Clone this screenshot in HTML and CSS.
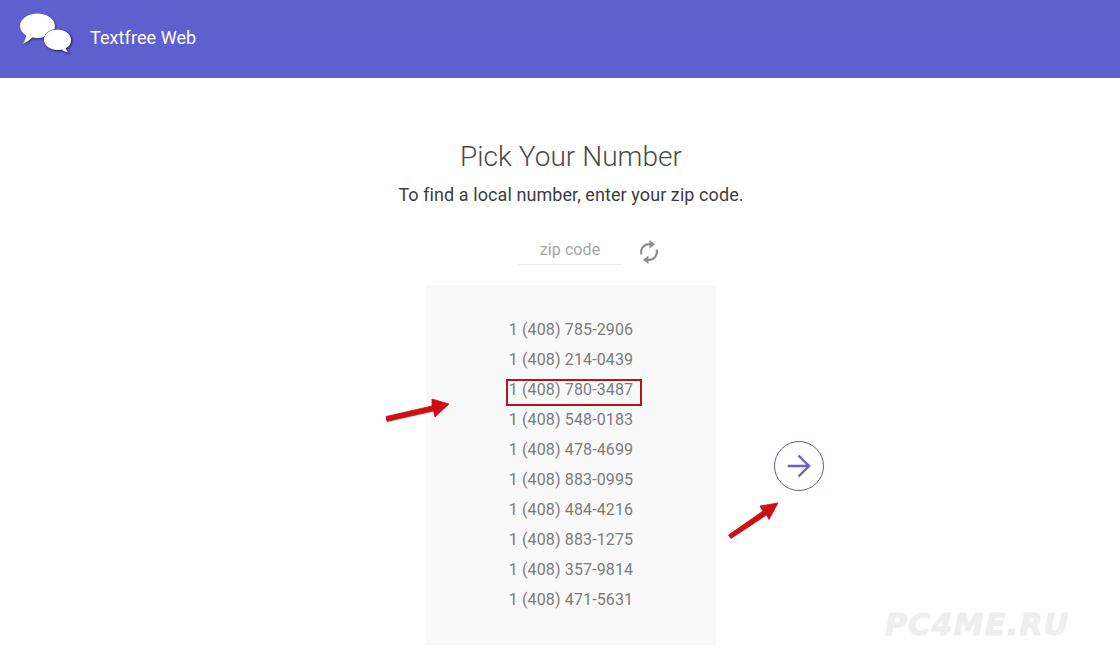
FILE: index.html
```html
<!DOCTYPE html>
<html lang="en">
<head>
  <meta charset="UTF-8" />
  <title>Textfree Web</title>
  <link rel="stylesheet" href="styles.css">
</head>
<body>

  <header class="header">
    <svg class="logo" width="56" height="42" viewBox="18 12 56 42">
      <path class="logo-bubble" d="M37.500 13.500C47 13.500 55 19 55 26C55 33 47 38 37.500 38C35.500 38 33.500 37.800 32 37.500C30 39.500 26.500 42.500 23 43.500C25 41 26 37.500 26 35.500C22 33 20 29.500 20 26C20 19 28 13.500 37.500 13.500Z" />
      <path class="logo-bubble logo-bubble-front" d="M57.500 29.500C65 29.500 71 34 71 40C71 44 69 46.500 66 48C66 49.500 67 51 68.500 52.500C65.500 52 62.500 50.500 61.500 49.500C60.500 50 59 50 57.500 50C50 50 44 45.500 44 40C44 34 50 29.500 57.500 29.500Z" />
    </svg>
    <span class="brand">Textfree Web</span>
  </header>

  <main class="content">
    <h1 class="title">Pick Your Number</h1>
    <p class="subtitle">To find a local number, enter your zip code.</p>

    <div class="zip-row">
      <input class="zip-input" type="text" placeholder="zip code" />
      <svg class="refresh" width="20" height="26" viewBox="639 239 20 26">
        <path class="refresh-arc" d="M641.500 254.500A8 8 0 0 1 650 244.200" />
        <path class="refresh-arc" d="M656.500 249.500A8 8 0 0 1 648 259.800" />
        <path d="M649.500 240L655 244.200L649.500 248.400Z" />
        <path d="M648.500 255.600L643 259.800L648.500 264Z" />
      </svg>
    </div>

    <div class="picker">
      <div class="number-panel">
        <div class="number">1 (408) 785-2906</div>
        <div class="number">1 (408) 214-0439</div>
        <div class="number number-marked">1 (408) 780-3487</div>
        <div class="number">1 (408) 548-0183</div>
        <div class="number">1 (408) 478-4699</div>
        <div class="number">1 (408) 883-0995</div>
        <div class="number">1 (408) 484-4216</div>
        <div class="number">1 (408) 883-1275</div>
        <div class="number">1 (408) 357-9814</div>
        <div class="number">1 (408) 471-5631</div>
      </div>

      <button class="next-button">
        <svg width="26" height="26" viewBox="0 0 26 26">
          <path d="M1.700 13H23.500M12.500 2.500L23 13L12.500 23.500" />
        </svg>
      </button>

      <svg class="mark-arrow mark-arrow-left" width="66" height="26" viewBox="385 398 66 26">
        <path d="M386 416.500L432 406L432 399L449 404L435 417L433.500 411L387 421.500Z" />
      </svg>
      <svg class="mark-arrow mark-arrow-right" width="52" height="40" viewBox="728 503 52 40">
        <path d="M728.500 535L763 511L760 506L778 503L769 519.500L766.500 515L731 538.500Z" />
      </svg>
    </div>
  </main>

  <div class="watermark">PC4ME.RU</div>

</body>
</html>
```

FILE: styles.css
```css
html, body {
  margin: 0;
  height: 666px;
  overflow: hidden;
}

body {
  font-family: 'Roboto', 'Liberation Sans', sans-serif;
  background: #fff;
  position: relative;
}

.header {
  background-color: #5f60d0;
  height: 78px;
  display: flex;
  align-items: center;
  padding-left: 18px;
  box-sizing: border-box;
  color: #fff;
}

.logo {
  margin-top: -12px;
  margin-right: 17px;
  flex: none;
  filter: drop-shadow(1px 1px 1px #2c2c66);
}

.logo-bubble {
  fill: #fff;
}

.logo-bubble-front {
  stroke: #34347a;
  stroke-width: 1;
  paint-order: stroke;
}

.brand {
  font-size: 18px;
  letter-spacing: 0.08px;
  padding-bottom: 3px;
  margin-left: -1px;
}

.content {
  margin-left: 22px;
  display: flex;
  flex-direction: column;
  align-items: center;
}

.title {
  margin: 62px 0 0;
  font-size: 28px;
  line-height: 34px;
  font-weight: 300;
  letter-spacing: 0.06px;
  color: #4a4a4a;
}

.subtitle {
  margin: 9px 0 0;
  font-size: 18px;
  line-height: 24px;
  letter-spacing: 0.08px;
  color: #3c3c3c;
}

.zip-row {
  margin-top: 26px;
  display: flex;
  align-items: center;
  margin-left: 34px;
}

.zip-input {
  width: 104px;
  height: 32px;
  padding: 2px 0 0 1px;
  border: none;
  border-bottom: 1px solid #eee;
  font-family: inherit;
  font-size: 16px;
  letter-spacing: 0.1px;
  text-align: center;
  box-sizing: border-box;
  outline: none;
}

.zip-input::placeholder {
  color: #a6a6a6;
}

.refresh {
  margin-left: 17px;
  margin-top: 3px;
  margin-bottom: -3px;
  fill: #8f8f8f;
}

.refresh-arc {
  fill: none;
  stroke: #8f8f8f;
  stroke-width: 2.200;
}

.picker {
  position: relative;
  margin-top: 20px;
}

.number-panel {
  width: 290px;
  height: 360px;
  padding-top: 30px;
  box-sizing: border-box;
  background: #f9f9f9;
  display: flex;
  flex-direction: column;
  align-items: center;
}

.number {
  height: 30px;
  line-height: 30px;
  font-size: 16px;
  letter-spacing: 0.13px;
  color: #7c7c7c;
}

.number-marked {
  position: relative;
}

.number-marked::after {
  content: "";
  position: absolute;
  top: 4px;
  bottom: -1px;
  left: -3px;
  right: -9px;
  border: 2px solid #b5141c;
}

.next-button {
  position: absolute;
  left: 348px;
  top: 156px;
  width: 50px;
  height: 50px;
  padding: 0;
  border: 1px solid #5a5aa8;
  border-radius: 50%;
  background: #fff;
  display: flex;
  align-items: center;
  justify-content: center;
}

.next-button path {
  fill: none;
  stroke: #6464c4;
  stroke-width: 2.400;
}

.mark-arrow {
  position: absolute;
  fill: #cc0f12;
  stroke: #cc0f12;
  stroke-width: 0.800;
  overflow: visible;
}

.mark-arrow-left {
  left: -41px;
  top: 113px;
}

.mark-arrow-right {
  left: 302px;
  top: 218px;
}

.watermark {
  position: absolute;
  left: 885px;
  top: 608px;
  font-family: 'DejaVu Sans', sans-serif;
  font-size: 30px;
  line-height: 34px;
  font-weight: bold;
  font-style: italic;
  letter-spacing: 1.300px;
  color: #eeeeee;
  -webkit-text-stroke: 0.800px #eeeeee;
}
```
